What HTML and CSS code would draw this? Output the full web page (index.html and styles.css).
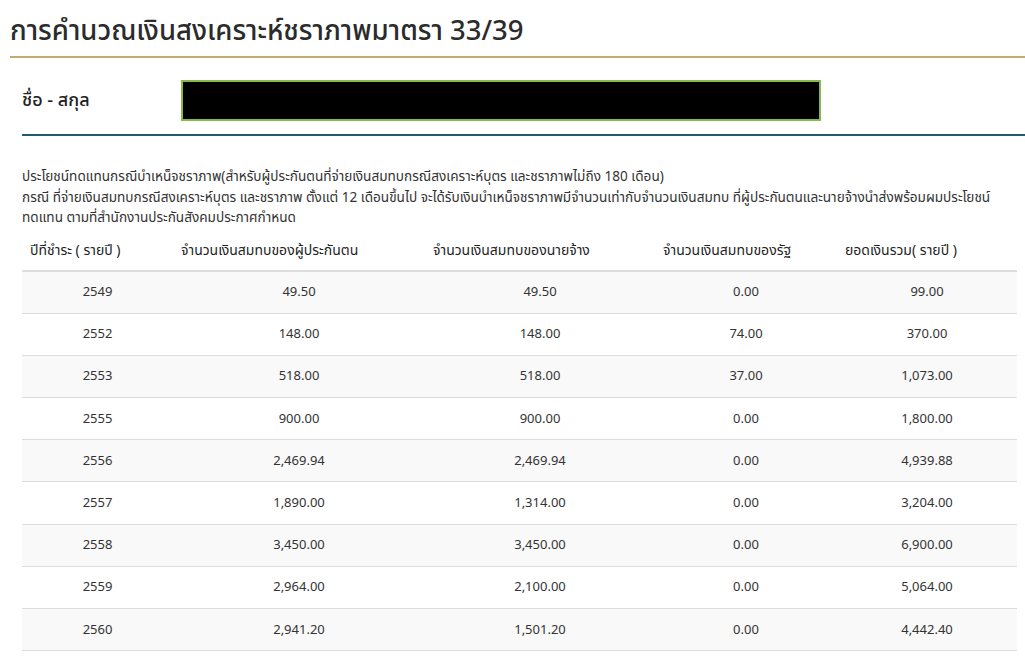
FILE: index.html
```html
<!DOCTYPE html>
<html lang="th">
<head>
<meta charset="utf-8">
<title>การคำนวณเงินสงเคราะห์ชราภาพมาตรา 33/39</title>
<link rel="stylesheet" href="styles.css">
</head>
<body>
<h1 class="title">การคำนวณเงินสงเคราะห์ชราภาพมาตรา 33/39</h1>
<main class="content">
  <div class="name-row">
    <div class="name-label">ชื่อ - สกุล</div>
    <div class="name-box"></div>
  </div>
  <p class="desc">ประโยชน์ทดแทนกรณีบำเหน็จชราภาพ(สำหรับผู้ประกันตนที่จ่ายเงินสมทบกรณีสงเคราะห์บุตร และชราภาพไม่ถึง 180 เดือน)<br>กรณี ที่จ่ายเงินสมทบกรณีสงเคราะห์บุตร และชราภาพ ตั้งแต่ 12 เดือนขึ้นไป จะได้รับเงินบำเหน็จชราภาพมีจำนวนเท่ากับจำนวนเงินสมทบ ที่ผู้ประกันตนและนายจ้างนำส่งพร้อมผมประโยชน์<br>ทดแทน ตามที่สำนักงานประกันสังคมประกาศกำหนด</p>
  <table class="calc">
    <colgroup>
      <col class="c1"><col class="c2"><col class="c3"><col class="c4"><col class="c5">
    </colgroup>
    <thead>
      <tr>
        <th>ปีที่ชำระ ( รายปี )</th>
        <th>จำนวนเงินสมทบของผู้ประกันตน</th>
        <th>จำนวนเงินสมทบของนายจ้าง</th>
        <th>จำนวนเงินสมทบของรัฐ</th>
        <th>ยอดเงินรวม( รายปี )</th>
      </tr>
    </thead>
    <tbody>
      <tr><td>2549</td><td>49.50</td><td>49.50</td><td>0.00</td><td>99.00</td></tr>
      <tr><td>2552</td><td>148.00</td><td>148.00</td><td>74.00</td><td>370.00</td></tr>
      <tr><td>2553</td><td>518.00</td><td>518.00</td><td>37.00</td><td>1,073.00</td></tr>
      <tr><td>2555</td><td>900.00</td><td>900.00</td><td>0.00</td><td>1,800.00</td></tr>
      <tr><td>2556</td><td>2,469.94</td><td>2,469.94</td><td>0.00</td><td>4,939.88</td></tr>
      <tr><td>2557</td><td>1,890.00</td><td>1,314.00</td><td>0.00</td><td>3,204.00</td></tr>
      <tr><td>2558</td><td>3,450.00</td><td>3,450.00</td><td>0.00</td><td>6,900.00</td></tr>
      <tr><td>2559</td><td>2,964.00</td><td>2,100.00</td><td>0.00</td><td>5,064.00</td></tr>
      <tr><td>2560</td><td>2,941.20</td><td>1,501.20</td><td>0.00</td><td>4,442.40</td></tr>
    </tbody>
  </table>
</main>
</body>
</html>
```
FILE: styles.css
```css
html, body {
  margin: 0;
  padding: 0;
  background: #ffffff;
}
body {
  font-family: "Noto Sans Thai", "Noto Sans Thai UI", "Noto Sans", "DejaVu Sans", sans-serif;
  color: #333333;
}
.title {
  margin: 0 0 0 10px;
  padding: 15px 0 7px;
  font-size: 27.5px;
  line-height: 34px;
  font-weight: 500;
  color: #2b2b2b;
  border-bottom: 2px solid #c1ad6f;
}
.content {
  padding: 0 0 0 22px;
}
.name-row {
  display: flex;
  align-items: center;
  padding: 22px 0 13px;
  border-bottom: 2px solid #1f5a70;
}
.name-label {
  width: 159px;
  font-size: 18px;
  font-weight: 500;
  color: #222222;
}
.name-box {
  width: 636px;
  height: 37px;
  background: #000000;
  border: 2px solid #86b84a;
}
.desc {
  margin: 31px 0 0;
  font-size: 13.6px;
  line-height: 20.5px;
  white-space: nowrap;
  color: #333333;
}
.calc {
  margin-top: 2px;
  width: 995px;
  border-collapse: collapse;
  table-layout: fixed;
}
.c1 { width: 151px; }
.c2 { width: 252px; }
.c3 { width: 230px; }
.c4 { width: 182px; }
.c5 { width: 180px; }
.calc th {
  height: 39px;
  padding: 0 8px;
  text-align: left;
  font-size: 14px;
  font-weight: 400;
  color: #1e1e1e;
  border-bottom: 2px solid #dddddd;
}
.calc td {
  height: 41.2px;
  padding: 0 8px;
  text-align: center;
  font-size: 13px;
  color: #333333;
  border-bottom: 1px solid #dddddd;
}
.calc tbody tr:nth-child(odd) {
  background: #f9f9f9;
}
```
